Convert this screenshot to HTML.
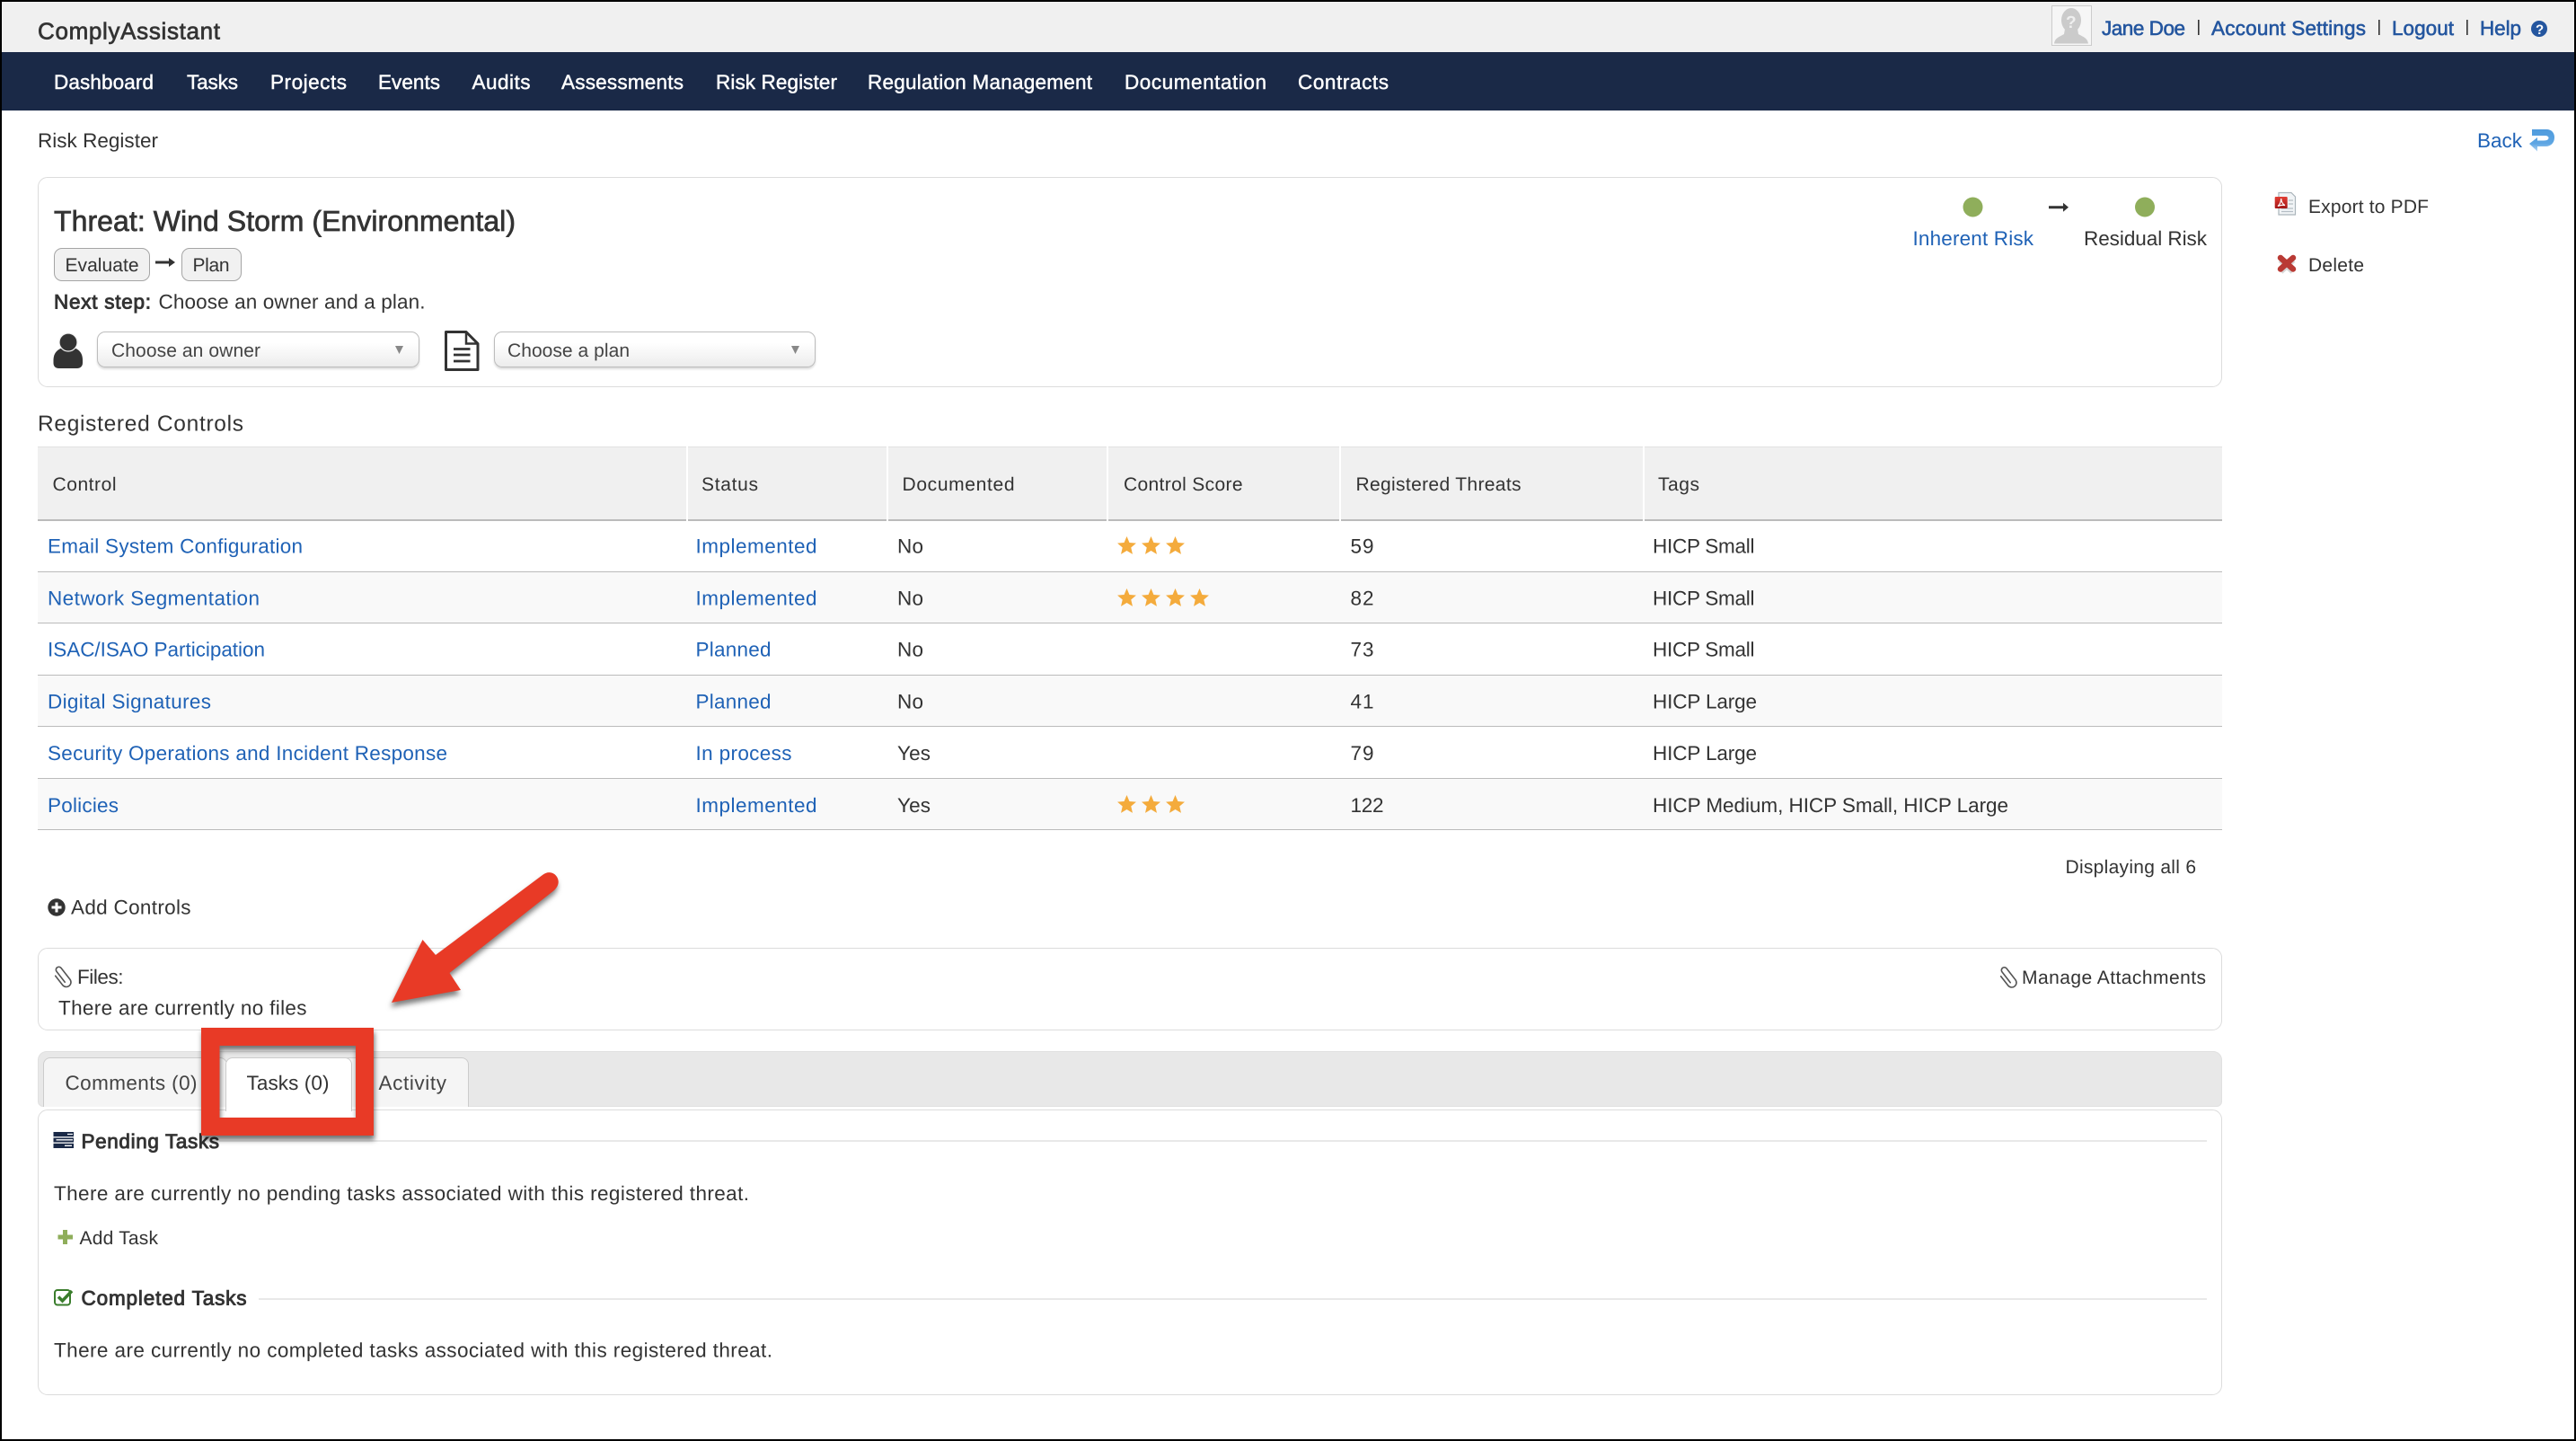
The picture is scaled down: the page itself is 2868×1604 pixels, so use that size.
<!DOCTYPE html>
<html lang="en">
<head>
<meta charset="utf-8">
<title>ComplyAssistant - Risk Register</title>
<style>
html,body{margin:0;padding:0;background:#fff}
#p{position:relative;width:2868px;height:1604px;overflow:hidden;background:#fff;font-family:"Liberation Sans",sans-serif;color:#333}
.b{position:absolute;box-sizing:border-box}
.card{border:1.5px solid #dcdcdc;border-radius:11px;background:#fff}
.btn{border:1.5px solid #a5a5a5;border-radius:9px;background:#f1f1f1}
.sel{border:1.5px solid #bdbdbd;border-radius:9px;background:linear-gradient(#fff,#fff 30%,#ececec);box-shadow:0 2px 2px rgba(0,0,0,.14)}
svg{position:absolute;left:0;top:0}
text{font-family:"Liberation Sans",sans-serif;font-size:22.5px;fill:#333;text-rendering:geometricPrecision}
.m{stroke:#333;stroke-width:.7px}
.h{stroke:#333;stroke-width:.9px}
.nav{fill:#fff;stroke:#fff;stroke-width:.45px}
.top{fill:#24569f;stroke:#24569f;stroke-width:.6px}
.l{fill:#1f62b6}
.s{font-size:21px}
</style>
</head>
<body>
<div id="p">
  <!-- header / nav -->
  <div class="b" style="left:0;top:0;width:2868px;height:58px;background:#f0f0f0"></div>
  <div class="b" style="left:0;top:58px;width:2868px;height:65px;background:#1a2947"></div>
  <div class="b" style="left:2284px;top:6px;width:45px;height:45px;background:#f6f6f6;border:1.5px solid #ccc"></div>

  <!-- threat card -->
  <div class="b card" style="left:42px;top:197px;width:2432px;height:234px"></div>
  <div class="b btn" style="left:60px;top:276px;width:107px;height:37px"></div>
  <div class="b btn" style="left:202px;top:276px;width:67px;height:37px"></div>
  <div class="b sel" style="left:108px;top:369px;width:359px;height:40px"></div>
  <div class="b sel" style="left:550px;top:369px;width:358px;height:40px"></div>

  <!-- table -->
  <div class="b" style="left:42px;top:497px;width:2432px;height:81px;background:#f0f0f0;border-top:1px solid #e2e2e2"></div>
  <div class="b" style="left:42px;top:578px;width:2432px;height:2px;background:#bbb"></div>
  <div class="b" style="left:764px;top:497px;width:2px;height:83px;background:#fff"></div>
  <div class="b" style="left:987px;top:497px;width:2px;height:83px;background:#fff"></div>
  <div class="b" style="left:1232px;top:497px;width:2px;height:83px;background:#fff"></div>
  <div class="b" style="left:1491px;top:497px;width:2px;height:83px;background:#fff"></div>
  <div class="b" style="left:1829px;top:497px;width:2px;height:83px;background:#fff"></div>
  <div class="b" style="left:42px;top:637px;width:2432px;height:56px;background:#f9f9f9"></div>
  <div class="b" style="left:42px;top:752px;width:2432px;height:56px;background:#f9f9f9"></div>
  <div class="b" style="left:42px;top:867px;width:2432px;height:56px;background:#f9f9f9"></div>
  <div class="b" style="left:42px;top:636px;width:2432px;height:1.3px;background:#bbb"></div>
  <div class="b" style="left:42px;top:693px;width:2432px;height:1.3px;background:#bbb"></div>
  <div class="b" style="left:42px;top:751px;width:2432px;height:1.3px;background:#bbb"></div>
  <div class="b" style="left:42px;top:808px;width:2432px;height:1.3px;background:#bbb"></div>
  <div class="b" style="left:42px;top:866px;width:2432px;height:1.3px;background:#bbb"></div>
  <div class="b" style="left:42px;top:923px;width:2432px;height:1.3px;background:#bbb"></div>

  <!-- files -->
  <div class="b card" style="left:42px;top:1055px;width:2432px;height:92px"></div>

  <!-- tabs -->
  <div class="b" style="left:42px;top:1170px;width:2432px;height:62px;background:#e8e8e8;border:1px solid #e0e0e0;border-radius:10px 10px 6px 6px"></div>
  <div class="b" style="left:48px;top:1177px;width:205px;height:55px;background:#f5f5f5;border:1px solid #ccc;border-bottom:0;border-radius:8px 8px 0 0"></div>
  <div class="b" style="left:380px;top:1177px;width:142px;height:55px;background:#f5f5f5;border:1px solid #ccc;border-bottom:0;border-radius:8px 8px 0 0"></div>
  <div class="b card" style="left:42px;top:1235px;width:2432px;height:318px"></div>
  <div class="b" style="left:251px;top:1177px;width:141px;height:60px;background:#fff;border:1px solid #ccc;border-bottom:0;border-radius:8px 8px 0 0"></div>
  <div class="b" style="left:244px;top:1269px;width:2213px;height:2px;background:#e8e8e8"></div>
  <div class="b" style="left:288px;top:1445px;width:2169px;height:2px;background:#e8e8e8"></div>

  <svg width="2868" height="1604" viewBox="0 0 2868 1604" xmlns="http://www.w3.org/2000/svg">
    <defs>
      <polygon id="star" fill="#f4ab3c" points="0,-11 2.94,-4.05 10.46,-3.4 4.76,1.55 6.47,8.9 0,5 -6.47,8.9 -4.76,1.55 -10.46,-3.4 -2.94,-4.05"/>
      <g id="clip"><path d="M-2 7V-8a3.200 3.200 0 0 1 6.400 0V8a5.200 5.200 0 0 1-10.400 0V-5" fill="none" stroke="#555" stroke-width="1.600" stroke-linecap="round"/></g>
      <linearGradient id="bk" x1="0" y1="0" x2="0" y2="1"><stop offset="0" stop-color="#4f9bdd"/><stop offset=".65" stop-color="#5ea6e3"/><stop offset="1" stop-color="#b5d6f2"/></linearGradient>
      <linearGradient id="rd" x1="0" y1="0" x2="0" y2="1"><stop offset="0" stop-color="#e23d33"/><stop offset="1" stop-color="#a21717"/></linearGradient>
    </defs>

    <!-- top bar -->
    <text class="m" x="42" y="43.500" textLength="203" style="font-size:26px">ComplyAssistant</text>
    <g fill="#cbcbcb">
      <ellipse cx="2306" cy="22.500" rx="11" ry="13.500"/>
      <path d="M2299 32h14l1 6c5 3 10 4 11 10.500h-38c1-6.500 6-7.500 11-10.500z"/>
    </g>
    <text x="2300" y="31" style="font-size:19px;fill:#efefef;font-weight:bold">?</text>
    <text class="top" x="2340" y="39" textLength="93">Jane Doe</text>
    <rect x="2447" y="22" width="1.600" height="17" fill="#333"/>
    <text class="top" x="2462" y="39" textLength="172">Account Settings</text>
    <rect x="2648" y="22" width="1.600" height="17" fill="#333"/>
    <text class="top" x="2663" y="39" textLength="69">Logout</text>
    <rect x="2746" y="22" width="1.600" height="17" fill="#333"/>
    <text class="top" x="2761" y="39" textLength="46">Help</text>
    <circle cx="2827" cy="32" r="9" fill="#24569f"/>
    <text x="2823" y="38" style="font-size:15px;font-weight:bold;fill:#fff">?</text>

    <!-- nav -->
    <text class="nav" x="60" y="99" textLength="111">Dashboard</text>
    <text class="nav" x="208" y="99" textLength="57">Tasks</text>
    <text class="nav" x="301" y="99" textLength="85">Projects</text>
    <text class="nav" x="421" y="99" textLength="69">Events</text>
    <text class="nav" x="525.500" y="99" textLength="65">Audits</text>
    <text class="nav" x="625" y="99" textLength="136">Assessments</text>
    <text class="nav" x="797" y="99" textLength="135">Risk Register</text>
    <text class="nav" x="966" y="99" textLength="250">Regulation Management</text>
    <text class="nav" x="1252" y="99" textLength="158">Documentation</text>
    <text class="nav" x="1445" y="99" textLength="101">Contracts</text>

    <!-- breadcrumb / back -->
    <text x="42" y="164" textLength="134">Risk Register</text>
    <text class="l" x="2758" y="164" textLength="50">Back</text>
    <path fill="url(#bk)" d="M2819 144H2835C2841 144 2844 148 2844 153C2844 159 2840 163 2834 163H2825V168.500L2816 160L2825 153V156.500H2832C2836 156.500 2837.500 155 2837.500 153.500C2837.500 152 2836 151 2833 151H2819Z"/>

    <!-- threat card content -->
    <text class="m" x="60" y="257" textLength="514" style="font-size:32px">Threat: Wind Storm (Environmental)</text>
    <text class="s" x="72.500" y="302" textLength="82">Evaluate</text>
    <text class="s" x="214.500" y="302" textLength="41">Plan</text>
    <path d="M173 290.500h15v-3.500l7 5-7 5v-3.500h-15z" fill="#333"/>
    <text class="h" x="60" y="343.500" textLength="108">Next step:</text>
    <text x="176.500" y="343.500" textLength="297">Choose an owner and a plan.</text>

    <!-- person icon -->
    <path d="M59.500 401C59.500 392 65 388 72 386.500H80C87 388 92 392 92 401V404C92 408 89 410 86 410H65.500C62 410 59.500 408 59.500 404Z" fill="#333"/>
    <circle cx="76" cy="381" r="10" fill="#333" stroke="#f2f2f2" stroke-width="1.200"/>
    <!-- doc icon -->
    <path d="M496.500 369.500H519L532 382.500V411.500H496.500Z" fill="#fff" stroke="#333" stroke-width="3" stroke-linejoin="round"/>
    <path d="M519 369.500V382.500H532" fill="none" stroke="#333" stroke-width="2.500"/>
    <path d="M505 388.500H523.500M505 395H523.500M505 402H523.500" stroke="#333" stroke-width="2.800"/>

    <text class="s" x="124" y="397" textLength="166" style="fill:#444">Choose an owner</text>
    <polygon points="440,385 449,385 444.500,394" fill="#888"/>
    <text class="s" x="565" y="397" textLength="136" style="fill:#444">Choose a plan</text>
    <polygon points="881,385 890,385 885.500,394" fill="#888"/>

    <circle cx="2196.500" cy="230.500" r="11" fill="#8fae5b"/>
    <circle cx="2388" cy="230.500" r="11" fill="#8fae5b"/>
    <path d="M2281 229.300h16v-3.500l6 5-6 5v-3.500h-16z" fill="#333"/>
    <text class="l" x="2129.500" y="273" textLength="134.500">Inherent Risk</text>
    <text x="2320" y="273" textLength="137">Residual Risk</text>

    <!-- side actions -->
    <path d="M2537 214.500H2551L2555.500 219V239H2537Z" fill="#f1f4f6" stroke="#aab4bb" stroke-width="1.200"/>
    <path d="M2548 223h5M2548 227h5M2540 232h13M2540 235.500h13" stroke="#b5bdc4" stroke-width="1.200"/>
    <rect x="2532.700" y="219" width="14" height="13" rx="1" fill="url(#rd)"/>
    <path d="M2536 229.500c2.500-2 3.500-5 3.700-8.500 .2 3.500 1.500 6 4.300 7.500-2.800-.5-5.500-.2-8 1z" fill="none" stroke="#fff" stroke-width="1.200"/>
    <text class="s" x="2570" y="237" textLength="134">Export to PDF</text>
    <path d="M2539 287L2553 300M2553 287L2539 300" stroke="#000" stroke-opacity=".16" stroke-width="7" transform="translate(0 2)"/>
    <path d="M2539 287L2553 299.500M2553 287L2539 299.500" stroke="#b93a34" stroke-width="6.500" stroke-linecap="round"/>
    <text class="s" x="2570" y="302" textLength="62">Delete</text>

    <!-- table -->
    <text x="42" y="479.500" textLength="229" style="font-size:24.500px">Registered Controls</text>
    <text class="s" x="58.500" y="546" textLength="71">Control</text>
    <text class="s" x="781" y="546" textLength="63">Status</text>
    <text class="s" x="1004.500" y="546" textLength="125">Documented</text>
    <text class="s" x="1251" y="546" textLength="132.500">Control Score</text>
    <text class="s" x="1509.500" y="546" textLength="184">Registered Threats</text>
    <text class="s" x="1846" y="546" textLength="46">Tags</text>

    <text class="l" x="53" y="615.500" textLength="284">Email System Configuration</text>
    <text class="l" x="53" y="673.500" textLength="236">Network Segmentation</text>
    <text class="l" x="53" y="730.500" textLength="242">ISAC/ISAO Participation</text>
    <text class="l" x="53" y="788.500" textLength="182">Digital Signatures</text>
    <text class="l" x="53" y="846" textLength="445">Security Operations and Incident Response</text>
    <text class="l" x="53" y="904" textLength="79">Policies</text>

    <text class="l" x="774.500" y="615.500" textLength="135">Implemented</text>
    <text class="l" x="774.500" y="673.500" textLength="135">Implemented</text>
    <text class="l" x="774.500" y="730.500" textLength="84">Planned</text>
    <text class="l" x="774.500" y="788.500" textLength="84">Planned</text>
    <text class="l" x="774.500" y="846" textLength="107">In process</text>
    <text class="l" x="774.500" y="904" textLength="135">Implemented</text>

    <text x="999" y="615.500" textLength="29">No</text>
    <text x="999" y="673.500" textLength="29">No</text>
    <text x="999" y="730.500" textLength="29">No</text>
    <text x="999" y="788.500" textLength="29">No</text>
    <text x="999" y="846" textLength="37">Yes</text>
    <text x="999" y="904" textLength="37">Yes</text>

    <use href="#star" x="1254.500" y="608"/><use href="#star" x="1281.500" y="608"/><use href="#star" x="1308.500" y="608"/>
    <use href="#star" x="1254.500" y="666"/><use href="#star" x="1281.500" y="666"/><use href="#star" x="1308.500" y="666"/><use href="#star" x="1335.500" y="666"/>
    <use href="#star" x="1254.500" y="896"/><use href="#star" x="1281.500" y="896"/><use href="#star" x="1308.500" y="896"/>

    <text x="1503.500" y="615.500" textLength="26">59</text>
    <text x="1503.500" y="673.500" textLength="26">82</text>
    <text x="1503.500" y="730.500" textLength="26">73</text>
    <text x="1503.500" y="788.500" textLength="26">41</text>
    <text x="1503.500" y="846" textLength="26">79</text>
    <text x="1503.500" y="904" textLength="37">122</text>

    <text x="1840" y="615.500" textLength="113.500">HICP Small</text>
    <text x="1840" y="673.500" textLength="113.500">HICP Small</text>
    <text x="1840" y="730.500" textLength="113.500">HICP Small</text>
    <text x="1840" y="788.500" textLength="116">HICP Large</text>
    <text x="1840" y="846" textLength="116">HICP Large</text>
    <text x="1840" y="904" textLength="396">HICP Medium, HICP Small, HICP Large</text>

    <text class="s" x="2299.500" y="972" textLength="145.500">Displaying all 6</text>

    <circle cx="63" cy="1010" r="9.700" fill="#333"/>
    <path d="M57.500 1010H68.500M63 1004.500V1015.500" stroke="#fff" stroke-width="3"/>
    <text x="79" y="1017.500" textLength="133.500">Add Controls</text>

    <!-- files -->
    <use href="#clip" transform="translate(69.500 1086.500) rotate(-38)"/>
    <text x="86" y="1095" textLength="51.500">Files:</text>
    <text x="65" y="1129.500" textLength="276.500">There are currently no files</text>
    <use href="#clip" transform="translate(2235.500 1087) rotate(-38)"/>
    <text class="s" x="2251" y="1095" textLength="205">Manage Attachments</text>

    <!-- tabs -->
    <text x="72.500" y="1213" textLength="147" style="fill:#444">Comments (0)</text>
    <text x="274.500" y="1213" textLength="92">Tasks (0)</text>
    <text x="421.500" y="1213" textLength="75.500" style="fill:#444">Activity</text>

    <!-- pending -->
    <rect x="59.500" y="1260" width="22.500" height="5.200" fill="#1a2947"/>
    <rect x="59.500" y="1266.500" width="22.500" height="5" fill="#1a2947"/>
    <rect x="59.500" y="1272.800" width="22.500" height="5.200" fill="#1a2947"/>
    <path d="M75 1262.500H81M62.500 1268.800H81M72 1275.300H80" stroke="#fff" stroke-width="1.300"/>
    <text class="h" x="90.500" y="1278" textLength="153.500">Pending Tasks</text>
    <text x="60" y="1336" textLength="774">There are currently no pending tasks associated with this registered threat.</text>
    <path d="M72.500 1369V1385M64.500 1377H81" stroke="#8fae5b" stroke-width="5"/>
    <text class="s" x="88.500" y="1385" textLength="87.500">Add Task</text>

    <!-- completed -->
    <rect x="61" y="1436" width="17" height="16.500" rx="3" fill="#fff" stroke="#3a7d2c" stroke-width="2"/>
    <path d="M65 1443.500L69.500 1448L80 1437" fill="none" stroke="#3a7d2c" stroke-width="3.500"/>
    <text class="h" x="90.500" y="1452.700" textLength="184">Completed Tasks</text>
    <text x="60" y="1510.700" textLength="800">There are currently no completed tasks associated with this registered threat.</text>

    <!-- annotations -->
    <g style="filter:drop-shadow(1px 5px 3px rgba(0,0,0,.55))">
      <path fill-rule="evenodd" fill="#e83a26" d="M224 1144H416V1264H224ZM244.500 1164V1244H396V1164Z"/>
    </g>
    <g style="filter:drop-shadow(-1px 5px 3px rgba(0,0,0,.5))">
      <path fill="#e83a26" d="M436 1116L470.500 1046L485 1063L604 974C610 969 617 971 620 976C623 981 622 986 617 991L500.500 1083L513 1102Z"/>
    </g>
  </svg>

  <!-- screenshot frame -->
  <div class="b" style="left:0;top:0;width:2868px;height:1604px;border:2px solid #000;border-bottom-width:2.500px"></div>
</div>
</body>
</html>
